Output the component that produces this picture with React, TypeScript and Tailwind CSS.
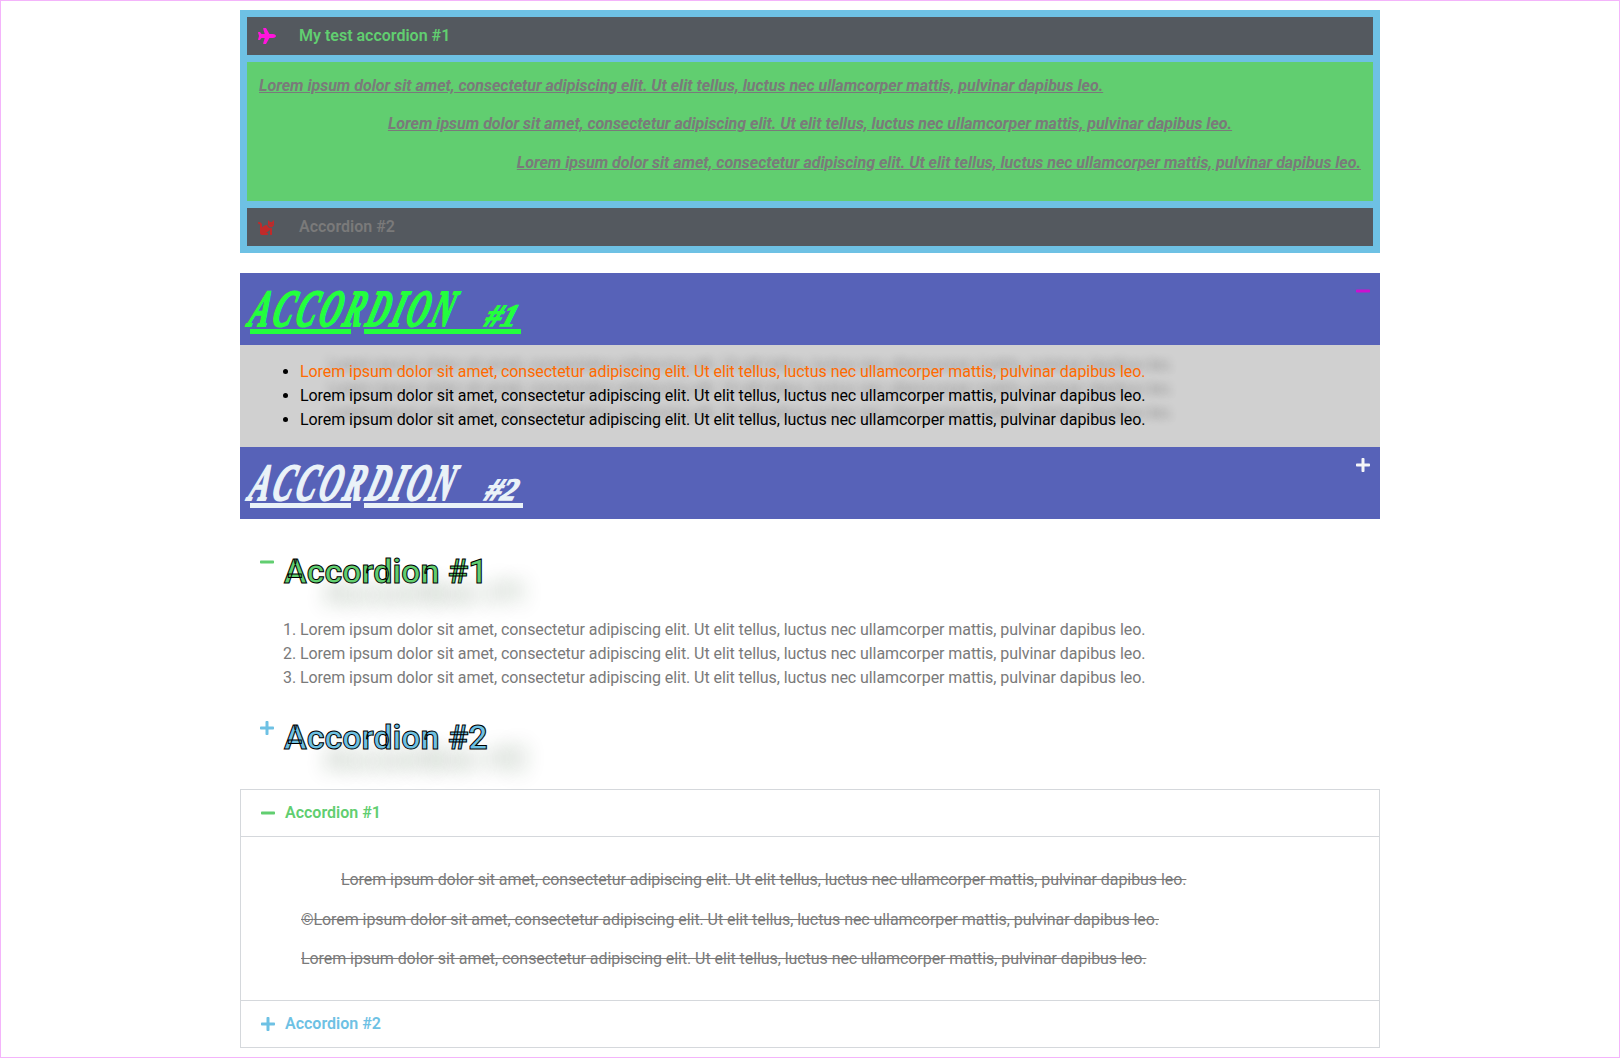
import React from "react";
import { FaCat, FaMinus, FaPlane, FaPlus } from "react-icons/fa";

const lorem =
  "Lorem ipsum dolor sit amet, consectetur adipiscing elit. Ut elit tellus, luctus nec ullamcorper mattis, pulvinar dapibus leo.";

function BoxedAccordion() {
  return (
    <section className="border-[7px] border-[#6ec1e4] bg-[#6ec1e4]">
      <div className="flex h-[38px] items-start bg-[#54595f] p-[11px] leading-4 font-semibold text-[#61ce70]">
        <div className="w-[41px] shrink-0">
          <FaPlane className="h-4 w-[18px] text-[#ff14dc]" />
        </div>
        My test accordion #1
      </div>
      <div className="mt-[7px] h-[139px] space-y-[14.4px] bg-[#61ce70] p-3 font-bold tracking-[-0.009px] italic underline">
        <p>{lorem}</p>
        <p className="text-center">{lorem}</p>
        <p className="text-right">{lorem}</p>
      </div>
      <div className="mt-[7px] flex h-[38px] items-start bg-[#54595f] p-[11px] leading-4 font-semibold">
        <div className="w-[41px] shrink-0">
          <FaCat className="size-4 text-[#c12a2a]" />
        </div>
        Accordion #2
      </div>
    </section>
  );
}

function ScriptTitle({ digit, wide }: { digit: string; wide?: boolean }) {
  return (
    <div className="relative h-[52px] w-[272px] font-['Liberation_Serif'] font-bold italic">
      <span className="absolute -top-[2px] -left-[3px] origin-[0_45px] -skew-x-[28deg] scale-x-[0.57] text-[52px] leading-[56px] tracking-[5.8px] whitespace-nowrap [-webkit-text-stroke:2px_currentColor]">
        ACCORDION
      </span>
      <span className="absolute top-0 left-[234px] origin-[0_42px] -skew-x-[18deg] text-[31px] leading-[66px] whitespace-nowrap [-webkit-text-stroke:1.4px_currentColor]">
        #{digit}
      </span>
      <span className="absolute top-[46px] left-0 h-[5px] w-[101px] bg-current" />
      <span
        className={
          wide
            ? "absolute top-[46px] left-[114px] h-[5px] w-[159px] bg-current"
            : "absolute top-[46px] left-[114px] h-[5px] w-[157px] bg-current"
        }
      />
    </div>
  );
}

function ScriptAccordion() {
  return (
    <section className="mt-5">
      <div className="flex h-[72px] justify-between bg-[#5762b8] p-[10px] text-[#23ff3d]">
        <ScriptTitle digit="1" />
        <FaMinus className="h-4 w-[14px] text-[#cc10cf]" />
      </div>
      <ul className="list-disc bg-[#d0d0d0] py-[15px] pl-[60px] tracking-[-0.069px] text-black [text-shadow:28px_-7px_10px_rgba(0,0,0,0.3)]">
        <li>
          <span className="text-[#ff6a00]">{lorem}</span>
        </li>
        <li>{lorem}</li>
        <li>{lorem}</li>
      </ul>
      <div className="flex h-[72px] justify-between bg-[#5762b8] p-[10px] text-[#eaf2f8]">
        <ScriptTitle digit="2" wide />
        <FaPlus className="h-4 w-[14px] text-[#f5f5f8]" />
      </div>
    </section>
  );
}

const strokedTitle =
  "text-[34px] leading-none font-semibold [-webkit-text-stroke:1px_#000] [text-shadow:40px_21px_20px_rgba(20,60,20,0.3)]";

function StrokedAccordion() {
  return (
    <section className="mt-5">
      <div className="flex px-5 py-[15px] text-[#61ce70]">
        <div className="w-6 shrink-0">
          <FaMinus className="h-4 w-[14px]" />
        </div>
        <h2 className={strokedTitle}>Accordion #1</h2>
      </div>
      <ol className="list-decimal py-[15px] pl-[60px] tracking-[-0.069px]">
        <li>{lorem}</li>
        <li>{lorem}</li>
        <li>{lorem}</li>
      </ol>
      <div className="flex px-5 py-[15px] text-[#6ec1e4]">
        <div className="w-6 shrink-0">
          <FaPlus className="h-4 w-[14px]" />
        </div>
        <h2 className={strokedTitle}>Accordion #2</h2>
      </div>
    </section>
  );
}

function OutlinedAccordion() {
  return (
    <section className="mt-5 border border-[#d5d8dc]">
      <div className="flex px-5 py-[15px] leading-4 font-semibold text-[#61ce70]">
        <div className="w-6 shrink-0">
          <FaMinus className="h-4 w-[14px]" />
        </div>
        Accordion #1
      </div>
      <div className="h-[164px] border-t border-[#d5d8dc] pt-[31px] pl-[60px] tracking-[-0.069px] line-through">
        <p className="pl-10">{lorem}</p>
        <p className="mt-4">©{lorem}</p>
        <p className="mt-[15px]">{lorem}</p>
      </div>
      <div className="flex border-t border-[#d5d8dc] px-5 py-[15px] leading-4 font-semibold text-[#6ec1e4]">
        <div className="w-6 shrink-0">
          <FaPlus className="h-4 w-[14px]" />
        </div>
        Accordion #2
      </div>
    </section>
  );
}

export default function App() {
  return (
    <main className="h-[1058px] overflow-hidden border border-[#f4b4fb] bg-white pt-[9px] font-[Roboto,sans-serif] text-base leading-6 text-[#7a7a7a]">
      <div className="mx-auto w-[1140px]">
        <BoxedAccordion />
        <ScriptAccordion />
        <StrokedAccordion />
        <OutlinedAccordion />
      </div>
    </main>
  );
}
